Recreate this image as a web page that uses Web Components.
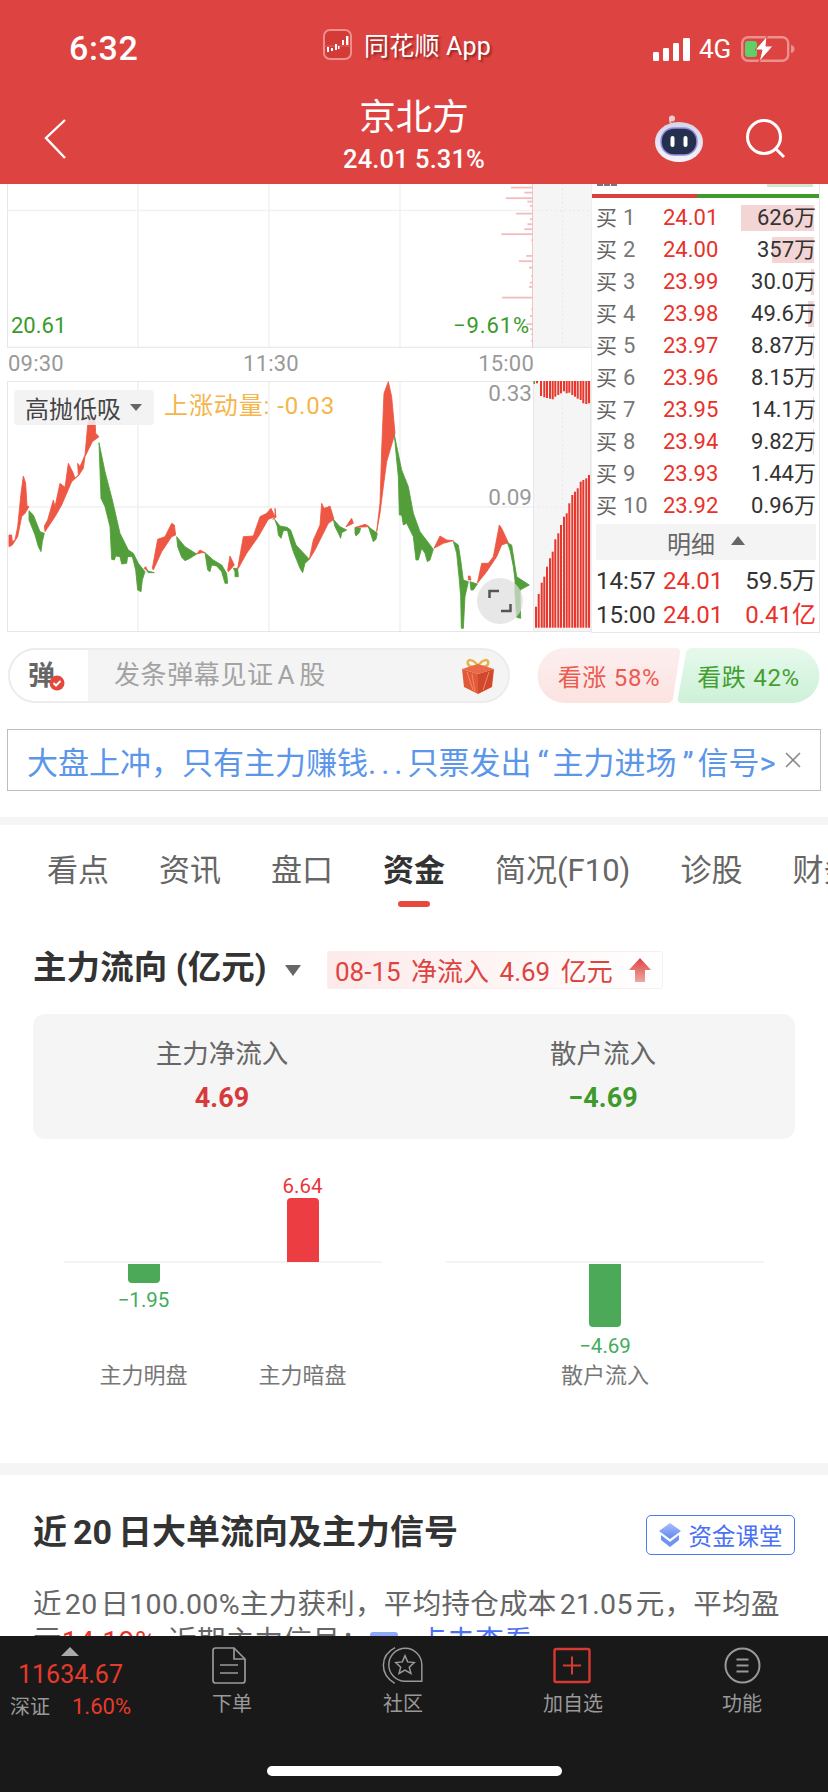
<!DOCTYPE html>
<html lang="zh-CN">
<head>
<meta charset="utf-8">
<title>京北方</title>
<style>
html,body{margin:0;padding:0;background:#fff}
body{width:828px;height:1792px;overflow:hidden;display:flex;flex-direction:column;font-family:Roboto,"Noto Sans CJK SC",sans-serif;color:#333}
main{flex:1;min-height:0;overflow:hidden;display:flex;flex-direction:column}
</style>
</head>
<body>
<x-header></x-header>
<main>
  <x-market></x-market>
  <x-danmu></x-danmu>
  <x-banner></x-banner>
  <x-sep style="margin-top:26px;height:8px"></x-sep>
  <x-tabs></x-tabs>
  <x-flow></x-flow>
  <x-sep style="margin-top:72px;height:12px"></x-sep>
  <x-signal></x-signal>
</main>
<x-footer></x-footer>
<script>
function def(name, html){
  customElements.define(name, class extends HTMLElement{
    constructor(){super();this.attachShadow({mode:'open'}).innerHTML=typeof html==='function'?html(this):html;}
  });
}
def('x-sep','<style>:host{display:block;flex:none;background:#f5f5f5}</style>');

def('x-header',`<style>
:host{display:block;flex:none;height:184px;background:#dd4441;color:#fff;position:relative;z-index:2}
.status{display:flex;align-items:center;padding:12px 0 0 69px;box-sizing:border-box;height:86px}
.time{width:254px;font-size:34px;font-weight:500;line-height:40px;letter-spacing:.6px;margin-top:-2px}
.app{display:flex;align-items:center;gap:12px;width:330px;margin-top:-10px}
.app span{font-size:25px;text-shadow:2px 2px 2px rgba(90,20,20,.55);letter-spacing:.2px}
.app svg{flex:none}
.right{display:flex;align-items:center}
.g4{font-size:26px;margin:0 10px 0 9px;line-height:30px}
.nav{display:grid;grid-template-columns:1fr 200px 1fr;align-items:center;height:98px}
.l{padding-left:44px;display:flex;margin-top:8px}
.c{text-align:center}
.t{font-size:36.500px;line-height:44px}
.s{font-size:25.500px;line-height:32px;letter-spacing:.1px;font-weight:500;white-space:nowrap;margin-top:3px}
.r{display:flex;justify-content:flex-end;align-items:center;gap:41px;padding-right:42px;margin-top:8px}
</style>
<div class="status">
  <div class="time">6:32</div>
  <div class="app">
    <svg width="29" height="31" viewBox="0 0 29 31"><rect x="1" y="1" width="27" height="29" rx="6" fill="#d33b38" stroke="#ef8e8c" stroke-width="2"/><path d="M1 17h27" stroke="#e8615e" stroke-width="1"/><g fill="#fff"><rect x="4" y="18" width="2" height="5"/><rect x="8" y="19" width="2" height="3"/><rect x="12" y="15" width="2" height="6"/><rect x="15" y="17" width="1.5" height="3"/><rect x="19" y="11" width="2" height="5"/><rect x="23" y="7" width="2.4" height="9"/></g></svg>
    <span>同花顺 App</span>
  </div>
  <div class="right">
    <svg width="37" height="23" viewBox="0 0 37 23" fill="#fff"><rect x="0" y="14" width="6" height="9" rx="1.2"/><rect x="10" y="10" width="6" height="13" rx="1.2"/><rect x="20" y="5" width="6" height="18" rx="1.2"/><rect x="30" y="0" width="7" height="23" rx="1.2"/></svg>
    <span class="g4">4G</span>
    <svg width="54" height="26" viewBox="0 0 54 26"><rect x="1.2" y="1.2" width="46" height="23.6" rx="6" fill="none" stroke="#fff" stroke-opacity=".42" stroke-width="2.4"/><path d="M50 9c2.500.6 3.500 2 3.500 4s-1 3.400-3.500 4z" fill="#fff" fill-opacity=".42"/><rect x="4" y="5" width="12" height="16" rx="3" fill="#5fd068"/><path d="M26 0 14 14h7l-3 12 14-16h-7z" fill="#fff" stroke="#dd4441" stroke-width="1"/></svg>
  </div>
</div>
<div class="nav">
  <div class="l"><svg width="24" height="42" viewBox="0 0 24 42"><path d="M21 2 2 20l19 20" fill="none" stroke="#fff" stroke-width="2.400"/></svg></div>
  <div class="c"><div class="t">京北方</div><div class="s">24.01 5.31%</div></div>
  <div class="r">
    <svg width="52" height="48" viewBox="0 0 52 48"><defs><linearGradient id="rb" x1="0" y1="0" x2="0" y2="1"><stop offset="0" stop-color="#d4d5e8"/><stop offset="1" stop-color="#f4f4fb"/></linearGradient></defs><path d="M19 9c-3-2-3-6 0-6" fill="none" stroke="#e8c4cc" stroke-width="1.500"/><circle cx="19" cy="3.500" r="3" fill="#eccdd2"/><path d="M20 8c1 0 2 1 3 2" stroke="#e8c4cc" stroke-width="1.500" fill="none"/><ellipse cx="26" cy="27" rx="24" ry="20" fill="url(#rb)"/><rect x="8" y="13" width="36" height="27" rx="13" fill="#25304f" stroke="#9a8ae0" stroke-width="1.500"/><rect x="17.500" y="21" width="4" height="11" rx="2" fill="#fff"/><rect x="30.500" y="21" width="4" height="11" rx="2" fill="#fff"/></svg>
    <svg width="40" height="40" viewBox="0 0 40 40"><circle cx="18" cy="18" r="16.500" fill="none" stroke="#fff" stroke-width="3"/><path d="M30 30l8 8" stroke="#fff" stroke-width="3"/></svg>
  </div>
</div>`);

def('x-market',`<style>:host{display:flex;flex:none;padding-left:7px;height:449px}</style><x-chart></x-chart><x-book></x-book>`);

/* -- chart -- */
function poly(c,pts){return '<polygon fill="'+c+'" stroke="'+c+'" stroke-width="2.500" stroke-linejoin="round" points="'+pts+'"/>';}
const R='#ee5743',G='#529e3a';
const left=[
[R,'12,405 20,405 22,425 30,420 38,380 48,280 55,228 62,250 66,318 72,320 60,340 50,350 38,410 22,435 12,440'],
[G,'72,332 85,345 105,395 118,400 112,425 108,455 100,440 90,405 76,370 72,360'],
[R,'118,378 128,360 145,300 150,320 165,250 180,262 190,190 205,220 210,235 220,225 218,190 225,200 240,165 248,75 255,45 270,55 272,100 282,110 262,125 240,170 235,205 222,225 200,245 170,315 150,350 120,395'],
[G,'282,128 300,215 322,300 345,400 370,450 385,460 400,490 420,515 412,540 408,575 398,570 392,510 382,470 368,470 365,490 350,492 345,470 332,468 328,480 320,478 315,380 300,320 288,295'],
[R,'417,505 422,500 428,512'],[G,'425,512 448,518 430,518'],
[R,'442,505 458,418 480,410 500,370 508,375 512,405 500,410 470,455 445,510'],
[G,'515,410 540,440 575,462 555,475 540,482 530,472 518,440'],
[R,'575,462 585,450 600,458 590,458'],
[G,'600,458 625,480 650,495 665,520 668,550 660,550 650,515 635,498 620,495 615,515 608,510'],
[R,'668,510 675,468 688,495 670,515'],[G,'685,505 698,505 700,530 690,530 690,515'],
[R,'698,505 715,410 745,408 765,350 785,340 798,325 810,350 790,358 760,410 725,460 700,505']];
const right=[
[R,'15,385 18,412 8,418 15,412'],
[G,'14,418 30,438 50,442 60,450 40,452 33,475 25,465 22,440'],
[G,'50,442 62,450 78,495 118,538 105,550 98,578 90,565 70,515 62,490'],
[R,'118,538 130,480 150,435 155,370 162,385 172,382 180,378 192,418 175,430 150,480 135,510'],
[G,'190,418 210,440 230,450 215,458 212,475 205,460 195,440'],
[R,'228,440 245,415 250,430'],[G,'255,442 272,445 268,458 258,468 255,460'],
[R,'258,442 285,433 298,440'],[G,'295,440 322,460 318,478 310,485 305,470'],
[R,'320,455 330,370 335,210 342,40 355,5 365,50 375,160 350,245 340,320 330,400'],
[G,'373,165 395,270 415,320 430,400 450,455 490,508 480,540 472,545 465,520 455,505 445,540 438,540 430,470 410,430 400,435 395,405 388,405 385,290 380,240'],
[R,'492,505 510,468 530,480 550,482 520,490'],
[G,'550,484 565,495 572,540 580,600 595,605 585,650 580,745 574,745 572,650 568,600 560,520'],
[R,'595,588 600,588 603,600 595,600'],[G,'600,605 622,612 610,630 603,630'],
[R,'622,610 635,550 655,550 670,530 688,435 695,445 715,488 695,495 680,530 650,575 630,600'],
[G,'712,488 725,495 740,590 778,615 760,625 750,630 752,715 740,712 735,640 735,600 730,560 720,510']];
const prof=[[20,1335],[35,1370],[52,1322],[62,1378],[75,1385],[98,1348],[115,1385],[130,1378],[145,1370],[160,1310],[178,1388],[225,1375],[241,1356],[260,1382],[285,1388],[305,1385],[318,1382],[350,1312],[385,1388],[405,1385],[430,1375],[445,1385],[460,1388],[480,1388]];
const bot=[[105,1310],[113,1272],[122,1238],[130,1220],[138,1190],[147,1165],[155,1145],[163,1108],[172,1090],[180,1065],[189,1040],[197,1030],[205,1000],[214,975],[222,965],[230,955],[239,935],[247,930],[256,925],[264,915]];
const topb=[[108,640],[120,678],[130,682],[138,684],[147,686],[155,688],[163,680],[172,675],[180,670],[189,664],[197,670],[205,668],[214,675],[222,680],[230,686],[239,690],[247,700],[256,702],[264,700]];
function gridV(y1,y2){return [7,138,269,400].map((x,i)=>'<path d="M'+(x+(i?0:.5))+' '+y1+'V'+y2+'" stroke="'+(i?'#f1f1f1':'#e6e6e6')+'" stroke-width="'+(i?1.5:1)+'"/>').join('');}
const upper=gridV(184,348)
 +'<rect x="533" y="184" width="58" height="164" fill="#f5f5f5"/>'
 +'<path d="M7 210.500H533" stroke="#f1f1f1" stroke-width="1.500"/>'
 +'<path d="M533 210.500H591M562.500 184V348" stroke="#e6e6e6" stroke-dasharray="1.500 3"/>'
 +'<path d="M7 347.500H591" stroke="#e9e9e9" stroke-width="1.500"/>'
 +'<path d="M532.500 184V348" stroke="#f3c6c6"/>'
 +prof.map(p=>'<rect x="'+(p[1]/2.613).toFixed(1)+'" y="'+(180+p[0]/3).toFixed(1)+'" width="'+(533-p[1]/2.613).toFixed(1)+'" height="1.800" fill="#f3bdbd"/>').join('');
const lower=gridV(381,632)
 +'<rect x="533" y="381" width="58" height="251" fill="#f5f5f5"/>'
 +'<path d="M7 381.500H591" stroke="#e9e9e9"/>'
 +'<path d="M7 507H533" stroke="#f1f1f1" stroke-width="1.500"/>'
 +'<path d="M533 507H591M562.500 381V632" stroke="#e6e6e6" stroke-dasharray="1.500 3"/>'
 +'<path d="M7 631.500H591M590.500 184V632M533.500 381V632" stroke="#e6e6e6"/>'
 +topb.map(p=>'<rect x="'+(500+p[0]/3).toFixed(1)+'" y="381" width="2" height="'+(170+p[1]/3-381).toFixed(1)+'" fill="#e8372c"/>').join('')
 +'<rect x="533.500" y="381" width="1.500" height="3" fill="#4c9f3a"/>'
 +bot.map(p=>'<rect x="'+(500+p[0]/3).toFixed(1)+'" y="'+(170+p[1]/3).toFixed(1)+'" width="2" height="'+(627.7-170-p[1]/3).toFixed(1)+'" fill="#e8372c"/>').join('')
 +'<g transform="translate(5 400) scale(.33333)">'+left.map(a=>poly(a[0],a[1])).join('')+'</g>'
 +'<g transform="translate(270 380) scale(.33333)">'+right.map(a=>poly(a[0],a[1])).join('')+'</g>';
def('x-chart',`<style>
:host{display:block;flex:none;width:584px;font-size:22px}
.plot{position:relative;display:block}
svg{display:block}
.lb{position:absolute;line-height:26px;white-space:nowrap}
.axis{display:flex;justify-content:space-between;height:33px;line-height:31px;color:#999;width:526px;padding-left:1px;font-size:22px;letter-spacing:.2px}
.g{color:#3a9a2a}
.gy{color:#999;right:59px;font-size:22.500px}
.mode{position:absolute;left:7px;top:9px;width:140px;height:35px;box-sizing:border-box;background:rgba(241,241,241,.88);border-radius:4px;display:flex;align-items:center;padding-left:11px;gap:9px;font-size:24px;color:#444;white-space:nowrap}
.mode i{width:0;height:0;border:6px solid transparent;border-top:7px solid #666;border-bottom:0}
.mom{position:absolute;left:157px;top:8px;font-size:24px;line-height:34px;color:#f5b54a;white-space:nowrap;letter-spacing:.9px}
.exp{position:absolute;left:470px;top:197px;width:46px;height:46px;border-radius:50%;background:rgba(222,222,222,.72);display:flex;align-items:center;justify-content:center}
</style>
<div class="plot" style="height:164px"><svg width="584" height="164" viewBox="7 184 584 164">${upper}</svg>
  <span class="lb g" style="left:4px;top:129px">20.61</span><span class="lb g" style="right:61px;top:129px;letter-spacing:.9px">−9.61%</span></div>
<div class="axis"><span>09:30</span><span>11:30</span><span>15:00</span></div>
<div class="plot" style="height:251px"><svg width="584" height="251" viewBox="7 381 584 251">${lower}</svg>
  <div class="mode">高抛低吸<i></i></div>
  <div class="mom">上涨动量: -0.03</div>
  <span class="lb gy" style="top:-1px">0.33</span><span class="lb gy" style="top:103px">0.09</span>
  <div class="exp"><svg width="24" height="24" viewBox="0 0 24 24" fill="none" stroke="#555" stroke-width="2.500"><path d="M1.500 9V2H11M22.500 15V22H13"/></svg></div>
</div>`);

/* -- order book -- */
def('x-book-row',(el)=>{
 const a=n=>el.getAttribute(n)||'';
 return `<style>
:host{display:grid;grid-template-columns:67px 1fr auto;height:32px;line-height:32px;font-size:22px;white-space:nowrap;align-items:center}
.l{color:#777;display:flex;gap:6px}.l b{font-weight:400;font-size:21px;color:#666}
.p{color:#e8312a}
.v{color:#333;grid-column:3}
.bar{position:absolute;right:2.500px;top:3px;height:26px;background:#f4d5d5;z-index:-1}
</style><span class="l"><b>买</b>${a('n')}</span><span class="p">${a('p')}</span>
<span class="v">${a('v')}</span>${a('w')?`<i class="bar" style="width:${a('w')}px"></i>`:''}`;
});
def('x-book',`<style>
:host{display:block;flex:none;width:229px;box-sizing:border-box;border-right:1.500px solid #e8e8e8;border-left:1px solid #eee;border-bottom:1px solid #e8e8e8;padding:0 3px 0 4px;position:relative;height:449px;overflow:hidden}
.cut{position:absolute;top:0;right:6px;width:46px;height:3px;background:#cfe8cc}
.cut2{position:absolute;top:0;left:5px;width:20px;height:2px;border-top:2px dashed #777}
.split{display:flex;height:4px;margin:10px -3px 4px -4px}
.split i:first-child{width:105px;background:#d8413c}.split i:last-child{flex:1;background:#3f9a2c}
x-book-row{position:relative;z-index:0;display:grid}
.more{height:36px;background:#f4f4f4;margin:2px 0 4px;display:flex;align-items:center;justify-content:center;gap:16px;font-size:24px;color:#666}
.more i{width:0;height:0;border:7px solid transparent;border-bottom:9px solid #666;border-top:0;margin-top:-4px}
.tr{display:grid;grid-template-columns:67px 1fr auto;height:34px;line-height:34px;font-size:24px;white-space:nowrap;color:#333}
.tr b{font-weight:400;color:#e8312a}
</style>
<div class="cut"></div><div class="cut2"></div>
<div class="split"><i></i><i></i></div>
<x-book-row n="1" p="24.01" v="626万" w="73"></x-book-row>
<x-book-row n="2" p="24.00" v="357万" w="42"></x-book-row>
<x-book-row n="3" p="23.99" v="30.0万" w="3"></x-book-row>
<x-book-row n="4" p="23.98" v="49.6万" w="6"></x-book-row>
<x-book-row n="5" p="23.97" v="8.87万" w="1"></x-book-row>
<x-book-row n="6" p="23.96" v="8.15万" w="1"></x-book-row>
<x-book-row n="7" p="23.95" v="14.1万" w="1"></x-book-row>
<x-book-row n="8" p="23.94" v="9.82万" w="1"></x-book-row>
<x-book-row n="9" p="23.93" v="1.44万"></x-book-row>
<x-book-row n="10" p="23.92" v="0.96万"></x-book-row>
<div class="more">明细<i></i></div>
<div class="tr"><span>14:57</span><b>24.01</b><span>59.5万</span></div>
<div class="tr"><span>15:00</span><b>24.01</b><b>0.41亿</b></div>`);

def('x-danmu',`<style>
:host{display:flex;flex:none;margin:15px 8px 0 8px;height:55px;justify-content:space-between;align-items:stretch}
.bar{width:502px;box-sizing:border-box;border:2px solid #ececec;border-radius:28px;display:flex;overflow:hidden;background:#f4f4f4}
.d{width:78px;flex:none;background:#fff;position:relative;font-size:27px;font-weight:700;color:#666;padding-left:18px;box-sizing:border-box;line-height:52px}
.d svg{position:absolute;left:39px;top:25px}
.ph{flex:1;font-size:26px;color:#a3a3a3;line-height:50px;padding-left:26px;letter-spacing:.6px}
.ph b{font-weight:400;margin:0 4px}
.gift{align-self:center;margin-right:13px;flex:none}
.vote{display:flex;width:283px;margin-left:auto;position:relative}
.up,.dn{display:flex;align-items:center;justify-content:center;font-size:24px;height:55px;flex:none;letter-spacing:.7px}
.up{width:144px;color:#ec5a50;background:linear-gradient(#fcefee,#fbe3e1);clip-path:path("M28 0H139Q144 0 143 5L136 50Q135 55 130 55H28A27.500 27.500 0 0 1 28 0Z")}
.dn{width:143px;margin-left:-4px;color:#43a030;background:linear-gradient(#e6f9ec,#cdf1d8);clip-path:path("M15 0H115A27.500 27.500 0 0 1 115 55H5Q0 55 1 50L9 5Q10 0 15 0Z")}
</style>
<div class="bar"><div class="d">弹<svg width="16" height="16" viewBox="0 0 16 16"><circle cx="8" cy="8" r="7.500" fill="#e2483c"/><path d="M4.500 8l2.500 2.500 4.500-4.500" fill="none" stroke="#fff" stroke-width="2"/></svg></div>
<div class="ph">发条弹幕见证<b>A</b>股</div>
<svg class="gift" width="34" height="36" viewBox="0 0 34 36"><path d="M17 8C12 0 5 1 7 6c1 3 6 3 10 2zM17 8c5-8 12-7 10-2-1 3-6 3-10 2z" fill="none" stroke="#e5b34a" stroke-width="2.500"/><path d="M1 11 17 6l16 5-16 5z" fill="#e96a48"/><path d="M1 11l16 5v20L3 29z" fill="#e25a3a"/><path d="M33 11 17 16v20l14-7z" fill="#d2482f"/><path d="M6 14l6 18M11 16l3 18M28 14l-6 18" stroke="#ee8a62" stroke-width="1"/></svg></div>
<div class="vote"><div class="up">看涨 58%</div><div class="dn">看跌 42%</div></div>`);

def('x-banner',`<style>
:host{display:flex;flex:none;margin:26px 7px 0 7px;height:62px;box-sizing:border-box;border:1.500px solid #bdbdbd;align-items:center;padding-left:19px;white-space:nowrap;overflow:hidden}
.t{font-size:31px;color:#5b96ea;width:757px;flex:none}
.t i{font-style:normal;letter-spacing:5px}
.t u{text-decoration:none;margin:0 4px 0 6px}
svg{flex:none}
</style><span class="t">大盘上冲，只有主力赚钱<i>...</i>只票发出<u>“</u>主力进场<u>”</u>信号&gt;</span>
<svg width="18" height="18" viewBox="0 0 18 18"><path d="M2 2l14 14M16 2 2 16" stroke="#888" stroke-width="1.600"/></svg>`);

def('x-tabs',`<style>
:host{display:flex;flex:none;height:82px;padding:26px 0 0 47px;box-sizing:border-box;gap:50px;overflow:hidden;white-space:nowrap;font-size:31px;color:#666}
.tab{flex:none;height:40px;line-height:40px;position:relative;display:flex;flex-direction:column;align-items:center}
.on{font-weight:700;color:#333}
.on i{display:block;flex:none;width:32px;height:6px;background:#e8493f;border-radius:3px;margin-top:10px}
</style><div class="tab">看点</div><div class="tab">资讯</div><div class="tab">盘口</div><div class="tab on">资金<i></i></div><div class="tab">简况(F10)</div><div class="tab">诊股</div><div class="tab">财务</div>`);

def('x-bar',(el)=>{
 const a=n=>el.getAttribute(n)||'';
 const h=a('h'),up=a('dir')==='up';
 const col=up?'#ec3d42':'#4ca958',tc=up?'#e9373c':'#3fad5b';
 return `<style>
:host{display:grid;grid-template-rows:88px 99px 30px;flex:1;justify-items:center;text-align:center;white-space:nowrap}
.top,.bt{display:flex;flex-direction:column;align-items:center;width:100%}
.top{justify-content:flex-end}
.b{width:32px;height:${h}px;background:${col};flex:none}
.top .b{border-radius:4px 4px 0 0}.bt .b{border-radius:0 0 4px 4px;margin-top:2px}
.v{font-size:20.500px;line-height:24px;color:${tc}}
.n{font-size:22px;line-height:30px;color:#777}
</style>
<div class="top">${up?`<div class="v">${a('v')}</div><div class="b"></div>`:''}</div>
<div class="bt">${up?'':`<div class="b"></div><div class="v" style="margin-top:${a('g')||7}px">${a('v')}</div>`}</div>
<div class="n">${a('n')}</div>`;
});
def('x-flow',`<style>
:host{display:block;flex:none;padding:41px 33px 0}
.head{display:flex;align-items:center;height:40px;white-space:nowrap}
h2{margin:0;font-size:33.500px;font-weight:700;color:#333;line-height:40px;width:235px;flex:none;letter-spacing:.1px}
.tri{flex:none;width:0;height:0;border:8px solid transparent;border-top:11px solid #666;border-bottom:0;margin:4px 26px 0 17px}
.tag{display:flex;align-items:center;height:38px;width:336px;flex:none;box-sizing:border-box;margin-top:3px;padding-left:7px;background:linear-gradient(90deg,#fdeaea,#fff);border:1px solid #fbeeee;border-radius:3px;color:#dd4441;font-size:26px;word-spacing:4px}
.tag span{width:294px;flex:none}
.card{display:flex;margin-top:26px;height:125px;background:#f5f5f5;border-radius:12px;padding-top:24px;box-sizing:border-box;text-align:center}
.card>div:first-child{width:378px}.card>div:last-child{width:384px}
.lb{font-size:26.500px;line-height:32px;color:#666}
.val{font-size:27px;line-height:36px;font-weight:700;margin-top:10px}
.chart{display:flex;margin:35px 31px 0;justify-content:space-between}
.p{width:318px;display:flex;background:linear-gradient(#f4f4f4,#f4f4f4) 0 87px/100% 2px no-repeat}
</style>
<div class="head"><h2>主力流向 (亿元)</h2><i class="tri"></i>
<div class="tag"><span>08-15 净流入 4.69 亿元</span><svg width="22" height="24" viewBox="0 0 22 24"><defs><linearGradient id="ar" x1="0" y1="0" x2="0" y2="1"><stop offset="0" stop-color="#dd4441"/><stop offset="1" stop-color="#eda6a4"/></linearGradient></defs><path d="M11 0 22 12h-6v12H6V12H0z" fill="url(#ar)"/></svg></div></div>
<div class="card"><div><div class="lb">主力净流入</div><div class="val" style="color:#d8393a">4.69</div></div>
<div><div class="lb">散户流入</div><div class="val" style="color:#3f9a2c">−4.69</div></div></div>
<div class="chart"><div class="p"><x-bar dir="down" h="19" g="5" v="−1.95" n="主力明盘"></x-bar><x-bar dir="up" h="64" v="6.64" n="主力暗盘"></x-bar></div>
<div class="p"><x-bar dir="down" h="63" v="−4.69" n="散户流入"></x-bar></div></div>`);

def('x-signal',`<style>
:host{display:block;flex:none;padding:40px 33px 0}
.head{display:flex;justify-content:space-between;align-items:flex-start}
h2{margin:-3px 0 0;font-size:34px;font-weight:700;line-height:40px;color:#333;white-space:nowrap}
h2 b{font-weight:700;margin:0 6px}
.btn{display:flex;align-items:center;justify-content:center;gap:8px;width:149px;height:40px;box-sizing:border-box;border:1.500px solid #4a7bf0;border-radius:5px;color:#4a70f5;font-size:23.500px;white-space:nowrap}
p{margin:31px 0 0;font-size:28.500px;line-height:37px;color:#666;white-space:nowrap;letter-spacing:.3px}
p span.n{margin:0 3px}
.r{color:#e8312a;margin-right:12px}
.q{display:inline-block;width:28px;height:28px;line-height:28px;text-align:center;background:#8fabf7;color:#fff;border-radius:3px;font-size:22px;font-weight:700;vertical-align:-2px;margin-right:20px}
.l{color:#4a70f5}
</style>
<div class="head"><h2>近<b>20</b>日大单流向及主力信号</h2>
<div class="btn"><svg width="22" height="24" viewBox="0 0 22 24"><defs><linearGradient id="cp" x1="0" y1="0" x2="0" y2="1"><stop offset="0" stop-color="#a9bffa"/><stop offset="1" stop-color="#5f86f3"/></linearGradient></defs><path d="M11 0 22 8 11 16 0 8z" fill="url(#cp)"/><path d="M2 12v5l9 7 9-7v-5l-9 7z" fill="#6f93f5"/></svg>资金课堂</div></div>
<p>近<span class="n">20</span>日100.00%主力获利，平均持仓成本<span class="n">21.05</span>元，平均盈<br>亏<span class="r">14.19%</span>近期主力信号：<span class="q">?</span><span class="l">点击查看</span></p>`);

def('x-footer',`<style>
:host{display:block;flex:none;height:156px;background:#191919;position:relative;z-index:2;color:#999}
.g{display:grid;grid-template-columns:148px 168px 174px 166px 172px;height:124px}
.idx{padding-top:11px;display:flex;flex-direction:column;white-space:nowrap}
.idx i{width:0;height:0;border:9px solid transparent;border-bottom:9px solid #aaa;border-top:0;margin-left:61px}
.price{font-size:25px;line-height:32px;color:#e83a2c;padding-left:18px;margin-top:3px}
.sub{display:flex;align-items:center;padding-left:10px;font-size:20px;line-height:30px;margin-top:1px}
.sub b{font-weight:400;font-size:22px;color:#e83a2c;margin-left:22px}
.it{display:flex;flex-direction:column;align-items:center;padding-top:11px;font-size:20px}
.it svg{height:37px;display:block}
.it span{margin-top:6px;line-height:28px;white-space:nowrap}
.home{width:295px;height:10px;border-radius:5px;background:#fff;margin:6px auto 0 267px}
</style>
<div class="g">
<div class="idx"><i></i><div class="price">11634.67</div><div class="sub">深证<b>1.60%</b></div></div>
<div class="it"><svg width="36" viewBox="0 0 36 37" fill="none" stroke="#999" stroke-width="1.700" style="margin-left:-6px"><path d="M2 3.500Q2 1 4.500 1H23L34 12V33.500Q34 36 31.500 36H4.500Q2 36 2 33.500Z"/><path d="M23 1V12H34M9 18H27M9 26H27"/></svg><span>下单</span></div>
<div class="it"><svg width="42" viewBox="575 52 122 112" fill="none" stroke="#999" stroke-width="4.500"><path d="M693 156H642A50 50 0 1 1 693 106Z"/><path d="M611 162C565 135 565 78 612 54"/><path d="M642 78 650 97 670 99 655 113 660 132 642 122 624 132 629 113 614 99 634 97Z"/></svg><span>社区</span></div>
<div class="it"><svg width="38" viewBox="0 0 38 37" fill="none" style="margin-left:-2px"><rect x="1.500" y="2" width="35" height="33" rx="1.500" stroke="#d63a30" stroke-width="2.400"/><path d="M10 18.500H28M19 9.500V27.500" stroke="#d63a30" stroke-width="2"/></svg><span>加自选</span></div>
<div class="it"><svg width="37" viewBox="0 0 37 37" fill="none" stroke="#999" stroke-width="2"><circle cx="18.500" cy="18.500" r="17"/><path d="M12.500 12.500H24.500M12.500 18.500H24.500M12.500 24.500H24.500"/></svg><span>功能</span></div>
</div>
<div class="home"></div>`);
</script>
</body>
</html>
